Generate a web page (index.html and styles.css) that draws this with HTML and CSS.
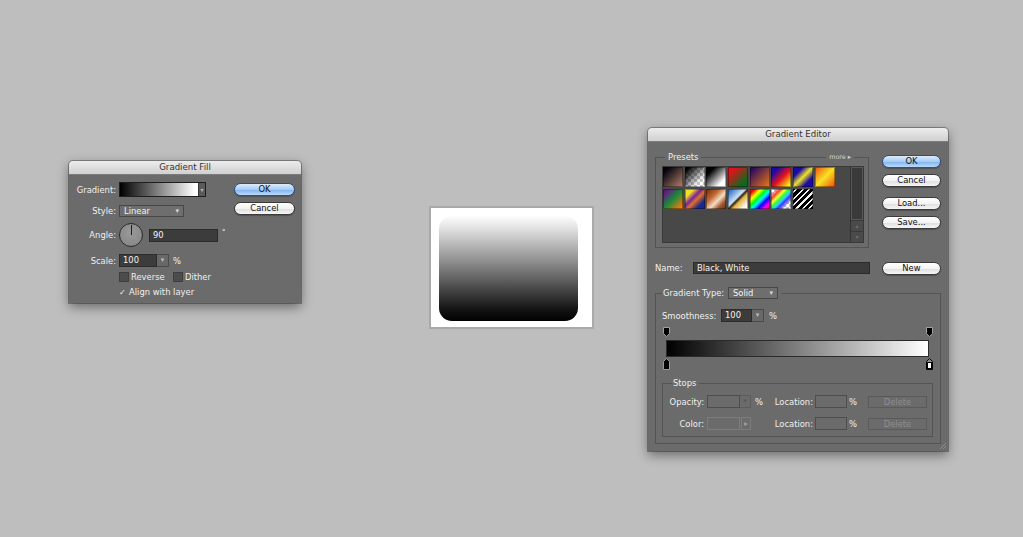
FILE: index.html
```html
<!DOCTYPE html>
<html lang="en">
<head>
    <meta charset="UTF-8">
    <meta name="viewport" content="width=device-width, initial-scale=1.0">
    <title>Gradient Fill</title>
    <link rel="stylesheet" href="styles.css">
</head>
<body>
    <!-- Gradient Fill dialog -->
    <div class="dialog fill-dialog">
        <div class="titlebar">Gradient Fill</div>
        <div class="fill-body">
            <div class="fill-form">
                <div class="row row-gradient">
                    <span class="label">Gradient:</span>
                    <div class="grad-picker">
                        <div class="grad-swatch"></div>
                        <div class="picker-arrow">▾</div>
                    </div>
                </div>
                <div class="row row-style">
                    <span class="label">Style:</span>
                    <div class="dropdown style-select">Linear<span class="caret">▾</span></div>
                </div>
                <div class="row row-angle">
                    <span class="label">Angle:</span>
                    <div class="angle-dial"><div class="dial-hand"></div></div>
                    <div class="field angle-field">90</div>
                    <span class="degree">°</span>
                </div>
                <div class="row row-scale">
                    <span class="label">Scale:</span>
                    <div class="field scale-field">100</div>
                    <div class="spin-arrow">▾</div>
                    <span class="unit">%</span>
                </div>
                <div class="row row-check">
                    <span class="label"></span>
                    <span class="checkbox"></span>
                    <span class="check-label reverse-label">Reverse</span>
                    <span class="checkbox"></span>
                    <span class="check-label">Dither</span>
                </div>
                <div class="row row-check">
                    <span class="label"></span>
                    <span class="checkmark">✓</span>
                    <span class="check-label">Align with layer</span>
                </div>
            </div>
            <div class="btn-col fill-btns">
                <button class="aqua default">OK</button>
                <button class="aqua">Cancel</button>
            </div>
        </div>
    </div>

    <!-- result preview -->
    <div class="preview">
        <div class="preview-shape"></div>
    </div>

    <!-- Gradient Editor dialog -->
    <div class="dialog editor">
        <div class="titlebar">Gradient Editor</div>
        <div class="editor-body">
            <div class="editor-top">
                <fieldset class="group presets">
                    <legend>Presets</legend>
                    <span class="more">more ▸</span>
                    <div class="preset-panel">
                        <div class="preset-grid">
                            <span class="preset p-fgbg"></span>
                            <span class="preset p-fgtrans"></span>
                            <span class="preset p-bw"></span>
                            <span class="preset p-redgreen"></span>
                            <span class="preset p-violetorange"></span>
                            <span class="preset p-bry"></span>
                            <span class="preset p-byb"></span>
                            <span class="preset p-oyo"></span>
                            <span class="preset p-vgo"></span>
                            <span class="preset p-yvob"></span>
                            <span class="preset p-copper"></span>
                            <span class="preset p-chrome"></span>
                            <span class="preset p-spectrum"></span>
                            <span class="preset p-transrainbow"></span>
                            <span class="preset p-stripes"></span>
                        </div>
                        <div class="scrollbar">
                            <div class="scroll-track"></div>
                            <div class="scroll-btn">▴</div>
                            <div class="scroll-btn">▾</div>
                        </div>
                    </div>
                </fieldset>
                <div class="btn-col editor-btns">
                    <button class="aqua default">OK</button>
                    <button class="aqua">Cancel</button>
                    <button class="aqua btn-load">Load...</button>
                    <button class="aqua">Save...</button>
                </div>
            </div>

            <div class="name-row">
                <span class="name-label">Name:</span>
                <div class="field name-field">Black, White</div>
                <button class="aqua btn-new">New</button>
            </div>

            <fieldset class="group gtype">
                <legend>
                    <span class="gt-label">Gradient Type:</span>
                    <div class="dropdown gt-select">Solid<span class="caret">▾</span></div>
                </legend>

                <div class="smooth-row">
                    <span class="smooth-label">Smoothness:</span>
                    <div class="field smooth-field">100</div>
                    <div class="spin-arrow">▾</div>
                    <span class="unit">%</span>
                </div>

                <div class="ramp">
                    <div class="ramp-bar"></div>
                    <svg class="stop stop-top stop-left" width="7" height="10" viewBox="0 0 7 10"><path d="M0.5 0.5H6.5V6.5L3.5 9.5L0.5 6.5Z" fill="#000" stroke="#a0a0a0"/></svg>
                    <svg class="stop stop-top stop-right" width="7" height="10" viewBox="0 0 7 10"><path d="M0.5 0.5H6.5V6.5L3.5 9.5L0.5 6.5Z" fill="#000" stroke="#a0a0a0"/></svg>
                    <svg class="stop stop-bottom stop-left" width="7" height="12" viewBox="0 0 7 12"><path d="M3.5 0.5L6.5 3.5V11.5H0.5V3.5Z" fill="#000" stroke="#9a9a9a"/></svg>
                    <svg class="stop stop-bottom stop-right" width="7" height="12" viewBox="0 0 7 12"><path d="M3.5 0.5L6.5 3.5V11.5H0.5V3.5Z" fill="#8a8a8a" stroke="#000"/><rect x="1.5" y="4.5" width="4" height="6" fill="#fff" stroke="#000"/></svg>
                </div>

                <fieldset class="group stops">
                    <legend>Stops</legend>
                    <div class="stop-row">
                        <span class="stop-label">Opacity:</span>
                        <div class="field off-field"></div>
                        <div class="spin-arrow off-arrow">▾</div>
                        <span class="pct">%</span>
                        <span class="loc-label">Location:</span>
                        <div class="field off-field loc-field"></div>
                        <span class="pct loc-pct">%</span>
                        <button class="flat-btn">Delete</button>
                    </div>
                    <div class="stop-row">
                        <span class="stop-label">Color:</span>
                        <div class="color-box"></div>
                        <div class="color-arrow">▸</div>
                        <span class="pct"></span>
                        <span class="loc-label">Location:</span>
                        <div class="field off-field loc-field"></div>
                        <span class="pct loc-pct">%</span>
                        <button class="flat-btn">Delete</button>
                    </div>
                </fieldset>
            </fieldset>
        </div>
        <svg class="grip" width="8" height="8" viewBox="0 0 8 8"><path d="M7 1L1 7M7 4L4 7" stroke="#8c8c8c" fill="none"/></svg>
    </div>
</body>
</html>
```

FILE: styles.css
```css
body {
    margin: 0;
    width: 1023px;
    height: 537px;
    background-color: #bebebe;
    font-family: "DejaVu Sans", sans-serif;
    font-size: 8.4px;
    color: #f0f0f0;
    position: relative;
    overflow: hidden;
}

/* windows */
.dialog {
    position: absolute;
    background-color: #6b6b6b;
    border-radius: 4px 4px 0 0;
    box-shadow: 0 0 0 1px rgba(0, 0, 0, 0.3), 0 4px 12px rgba(0, 0, 0, 0.45);
    box-sizing: border-box;
}
.fill-dialog {
    left: 69px;
    top: 161px;
    width: 232px;
    height: 142px;
}
.editor {
    left: 648px;
    top: 128px;
    width: 300px;
    height: 323px;
}
.titlebar {
    height: 13px;
    line-height: 13px;
    text-align: center;
    font-size: 8.6px;
    color: #333;
    background: linear-gradient(#ececec, #d0d0d0);
    border-bottom: 1px solid #7c7c7c;
    border-radius: 4px 4px 0 0;
}

/* shared controls */
.aqua {
    display: block;
    box-sizing: border-box;
    height: 13px;
    padding: 0;
    border: 1px solid #3a3a3a;
    border-radius: 7px;
    background: linear-gradient(#ffffff, #f3f3f3 50%, #dedede 52%, #f6f6f6);
    box-shadow: 0 1px 1px rgba(0, 0, 0, 0.25);
    font-family: "DejaVu Sans", sans-serif;
    font-size: 8.4px;
    line-height: 11px;
    color: #111;
}
.aqua.default {
    border-color: #2d4f82;
    background: linear-gradient(#dcebfc, #a9ccf5 50%, #80b3ee 52%, #b9dafc);
}
.field {
    box-sizing: border-box;
    height: 13px;
    line-height: 11px;
    padding-left: 3px;
    background-color: #3c3c3c;
    border: 1px solid #2b2b2b;
    color: #f4f4f4;
}
.spin-arrow {
    box-sizing: border-box;
    width: 12px;
    height: 13px;
    line-height: 11px;
    text-align: center;
    font-size: 7px;
    color: #bcbcbc;
    background-color: #686868;
    border: 1px solid #4a4a4a;
    border-left: none;
}
.dropdown {
    box-sizing: border-box;
    height: 12px;
    line-height: 10px;
    padding-left: 4px;
    border: 1px solid #474747;
    background-color: #6e6e6e;
    color: #f4f4f4;
    display: flex;
    justify-content: space-between;
}
.caret {
    font-size: 7px;
    color: #d8d8d8;
    padding-right: 4px;
}
.unit {
    margin-left: 4px;
}

/* Gradient Fill */
.fill-body {
    display: flex;
    padding: 7px 6px 0 0;
}
.fill-form {
    flex: 1;
}
.row {
    display: flex;
    align-items: center;
}
.label {
    flex: none;
    width: 47px;
    margin-right: 3px;
    text-align: right;
}
.row-gradient { height: 15px; }
.row-style { height: 12px; margin-top: 8px; }
.row-angle { height: 24px; margin-top: 6px; }
.row-scale { height: 13px; margin-top: 7px; }
.row-check { height: 10px; margin-top: 5px; }

.grad-picker {
    display: flex;
    height: 15px;
    border: 1px solid #1e1e1e;
    box-sizing: border-box;
}
.grad-swatch {
    width: 78px;
    background: linear-gradient(to right, #000, #fff 96%, #fff);
}
.picker-arrow {
    width: 6px;
    background-color: #5a5a5a;
    border-left: 1px solid #333;
    color: #bbb;
    font-size: 6px;
    line-height: 13px;
    text-align: center;
}
.style-select {
    width: 65px;
}
.angle-dial {
    position: relative;
    width: 24px;
    height: 24px;
    box-sizing: border-box;
    border-radius: 50%;
    border: 1px solid #2a2a2a;
    background: radial-gradient(circle at 50% 40%, #9a9a9a, #838383);
}
.dial-hand {
    position: absolute;
    left: 10.5px;
    top: 1px;
    width: 1px;
    height: 10px;
    background-color: #1e1e1e;
}
.angle-field {
    width: 69px;
    margin-left: 6px;
}
.degree {
    align-self: flex-start;
    margin: 5px 0 0 4px;
    font-size: 7px;
}
.scale-field {
    width: 38px;
}
.checkbox {
    width: 8px;
    height: 8px;
    background-color: #4c4c4c;
    border: 1px solid #3e3e3e;
    margin-right: 2px;
}
.checkmark {
    width: 10px;
    font-size: 8px;
    color: #f0f0f0;
}
.reverse-label {
    width: 42px;
}
.btn-col {
    display: flex;
    flex-direction: column;
    gap: 6px;
}
.fill-btns {
    width: 61px;
    margin-top: 1px;
}

/* preview */
.preview {
    position: absolute;
    left: 429px;
    top: 206px;
    width: 165px;
    height: 123px;
    box-sizing: border-box;
    border: 2px solid #a9a9a9;
    background-color: #fff;
    padding: 8px 14px 6px 8px;
}
.preview-shape {
    height: 100%;
    border-radius: 13px;
    background: linear-gradient(#fdfdfd, #e6e6e6 10%, #7c7c7c 50%, #161616 88%, #000);
}

/* Gradient Editor */
.editor-body {
    padding: 10px 7px 0 7px;
}
.editor-top {
    display: flex;
    gap: 13px;
}
.group {
    margin: 0;
    min-width: 0;
    border: 1px solid #545454;
}
.group legend {
    padding: 0 3px;
    line-height: 10px;
}
.presets {
    position: relative;
    width: 214px;
    box-sizing: border-box;
    padding: 4px 4px 4px 6px;
}
.presets legend {
    margin-left: 3px;
}
.more {
    position: absolute;
    top: -10px;
    right: 14px;
    padding: 0 3px;
    line-height: 10px;
    font-size: 6.4px;
    color: #d2d2d2;
    background-color: #6b6b6b;
}
.preset-panel {
    display: flex;
    height: 77px;
    box-sizing: border-box;
    border: 1px solid #393939;
    background-color: #484848;
}
.preset-grid {
    flex: 1;
    display: grid;
    grid-template-columns: repeat(8, 20px);
    grid-auto-rows: 20px;
    column-gap: 1.7px;
    row-gap: 2px;
    align-content: start;
}
.preset {
    box-shadow: inset 0 0 0 1px rgba(0, 0, 0, 0.35);
}
.p-fgbg { background: linear-gradient(135deg, #04040e 15%, #b8826f); }
.p-fgtrans {
    background: linear-gradient(135deg, #000 10%, rgba(0, 0, 0, 0) 75%),
        repeating-conic-gradient(#c6c6c6 0% 25%, #fff 0% 50%) 0 0 / 6px 6px;
}
.p-bw { background: linear-gradient(135deg, #000 22%, #fff 78%); }
.p-redgreen { background: linear-gradient(135deg, #e0121c 20%, #0b6a1c 80%); }
.p-violetorange { background: linear-gradient(135deg, #2a0a5e 10%, #f27a10); }
.p-bry { background: linear-gradient(135deg, #1c0aa4 20%, #e8121c 55%, #f8f012 90%); }
.p-byb { background: linear-gradient(135deg, #1c0aa4 25%, #ece224 50%, #1c0aa4 75%); }
.p-oyo { background: linear-gradient(135deg, #f25a10 5%, #f8e224 50%, #f25a10 95%); }
.p-vgo { background: linear-gradient(135deg, #6e0a8e 10%, #1a8a3a 50%, #f27a10 90%); }
.p-yvob { background: linear-gradient(135deg, #f2e222 22%, #7a22a2 42%, #e07022 55%, #1a2a8a 78%); }
.p-copper { background: linear-gradient(135deg, #7a3012 5%, #c26a32 35%, #f4dcc4 58%, #a25a32 78%, #6a2a12); }
.p-chrome { background: linear-gradient(135deg, #2f6fc0 8%, #cfe4fa 44%, #2a2010 51%, #e2b242 60%, #fff 88%); }
.p-spectrum { background: linear-gradient(135deg, #f00 12%, #ff0 28%, #0f0 42%, #0ff 54%, #00f 68%, #f0f 84%, #f00); }
.p-transrainbow {
    background: linear-gradient(135deg, rgba(255, 0, 0, 0) 12%, #f33 24%, #ff3 36%, #3f3 46%, #3cf 56%, #33f 66%, rgba(0, 0, 255, 0) 82%),
        repeating-conic-gradient(#c6c6c6 0% 25%, #fff 0% 50%) 0 0 / 6px 6px;
}
.p-stripes {
    background: repeating-linear-gradient(135deg, #000 0 2px, #f2f2f2 2px 3.5px, #000 3.5px 4.5px),
        #000;
}
.scrollbar {
    width: 12px;
    display: flex;
    flex-direction: column;
    border-left: 1px solid #333;
}
.scroll-track {
    flex: 1;
    background-color: #3a3a3a;
    border: 1px solid #575757;
}
.scroll-btn {
    height: 10px;
    line-height: 10px;
    text-align: center;
    font-size: 6px;
    color: #6e6e6e;
    background-color: #4a4a4a;
    border-top: 1px solid #3a3a3a;
}
.editor-btns {
    width: 59px;
    margin-top: 3px;
}
.btn-load {
    margin-top: 4px;
}

.name-row {
    display: flex;
    margin-top: 14px;
    height: 13px;
}
.name-label {
    width: 38px;
    line-height: 12px;
}
.name-field {
    width: 177px;
    height: 12px;
    line-height: 10px;
}
.btn-new {
    width: 59px;
    margin-left: 12px;
}

.gtype {
    margin-top: 12px;
    padding: 10px 7px 6px 6px;
}
.gtype legend {
    display: flex;
    align-items: center;
    padding: 0 3px 0 1px;
    line-height: 12px;
}
.gt-label {
    width: 63px;
    margin-right: 2px;
}
.gt-select {
    width: 50px;
}
.smooth-row {
    display: flex;
    align-items: center;
    height: 13px;
}
.smooth-label {
    width: 59px;
    white-space: nowrap;
}
.smooth-field {
    width: 31px;
}
.smooth-row .unit {
    margin-left: 5px;
}
.ramp {
    position: relative;
    height: 43px;
    box-sizing: border-box;
    margin-top: 5px;
    padding: 13px 4px 0 4px;
}
.ramp-bar {
    height: 17px;
    box-sizing: border-box;
    border: 1px solid #2a2a2a;
    background: linear-gradient(to right, #000, #fff);
}
.stop {
    position: absolute;
}
.stop-top { top: 0; }
.stop-bottom { top: 31px; }
.stop-left { left: 1px; }
.stop-right { right: 0; }

.stops {
    margin-top: 7px;
    padding: 6px 0 6px 0;
}
.stops legend {
    margin-left: 9px;
}
.stop-row {
    display: flex;
    align-items: center;
    height: 13px;
}
.stop-row + .stop-row {
    margin-top: 9px;
}
.stop-label {
    width: 41px;
    margin-right: 3px;
    text-align: right;
}
.off-field {
    width: 33px;
    background-color: transparent;
    border-color: #4e4e4e;
}
.off-arrow {
    width: 11px;
    background-color: transparent;
    border-color: #5c5c5c;
    color: #5a5a5a;
}
.pct {
    width: 20px;
    padding-left: 4px;
    box-sizing: border-box;
}
.loc-label {
    width: 42px;
    text-align: right;
}
.loc-field {
    width: 32px;
    margin-left: 2px;
}
.loc-pct {
    width: 21px;
    padding-left: 2px;
}
.color-box {
    box-sizing: border-box;
    width: 33px;
    height: 13px;
    border: 1px solid #7c7c7c;
}
.color-arrow {
    box-sizing: border-box;
    width: 10px;
    height: 13px;
    margin-left: 1px;
    border: 1px solid #7c7c7c;
    font-size: 8px;
    line-height: 11px;
    text-align: center;
    color: #9c9c9c;
}
.flat-btn {
    box-sizing: border-box;
    width: 59px;
    height: 12px;
    padding: 0;
    border: 1px solid #5a5a5a;
    background-color: #6b6b6b;
    font-family: "DejaVu Sans", sans-serif;
    font-size: 8.4px;
    line-height: 10px;
    color: #8e8e8e;
}
.grip {
    position: absolute;
    right: 1px;
    bottom: 1px;
}
```
